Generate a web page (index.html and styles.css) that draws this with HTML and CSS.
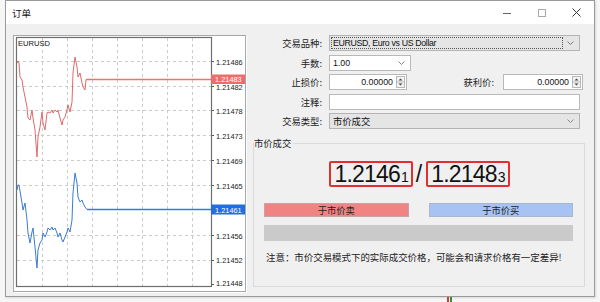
FILE: index.html
```html
<!DOCTYPE html>
<html lang="zh">
<head>
<meta charset="utf-8">
<title>订单</title>
<link rel="stylesheet" href="styles.css">
</head>
<body>
<div class="screen">
  <div class="window">
    <div class="titlebar">
      <span class="title">订单</span>
      <div class="wctrl">
        <svg width="8" height="8" viewBox="0 0 8 8"><line x1="0" y1="4.5" x2="8" y2="4.5" stroke="#666" stroke-width="1"/></svg>
      </div>
      <div class="wctrl">
        <svg width="8" height="8" viewBox="0 0 8 8"><rect x="0.5" y="0.5" width="7" height="7" fill="none" stroke="#aaa" stroke-width="1"/></svg>
      </div>
      <div class="wctrl">
        <svg width="9" height="9" viewBox="0 0 9 9"><path d="M0.5 0.5 L8.5 8.5 M8.5 0.5 L0.5 8.5" stroke="#333" stroke-width="1"/></svg>
      </div>
    </div>
    <div class="content">
      <div class="chart-panel">
        <svg class="chart" width="231" height="255" viewBox="14 36 231 255">
          <rect x="14" y="36" width="231" height="255" fill="#fff"/>
          <g stroke="#cbcbcb" stroke-width="1" stroke-dasharray="3,3">
            <line x1="42.5" y1="38" x2="42.5" y2="286"/>
            <line x1="67.5" y1="38" x2="67.5" y2="286"/>
            <line x1="92.5" y1="38" x2="92.5" y2="286"/>
            <line x1="117.5" y1="38" x2="117.5" y2="286"/>
            <line x1="142.5" y1="38" x2="142.5" y2="286"/>
            <line x1="167.5" y1="38" x2="167.5" y2="286"/>
            <line x1="192.5" y1="38" x2="192.5" y2="286"/>
            <line x1="17" y1="61.5" x2="211" y2="61.5"/>
            <line x1="17" y1="86.5" x2="211" y2="86.5"/>
            <line x1="17" y1="110.5" x2="211" y2="110.5"/>
            <line x1="17" y1="135.5" x2="211" y2="135.5"/>
            <line x1="17" y1="160.5" x2="211" y2="160.5"/>
            <line x1="17" y1="185.5" x2="211" y2="185.5"/>
            <line x1="17" y1="235.5" x2="211" y2="235.5"/>
            <line x1="17" y1="260.5" x2="211" y2="260.5"/>
          </g>
          <g stroke="#555" stroke-width="1">
            <line x1="211" y1="61.5" x2="214" y2="61.5"/>
            <line x1="211" y1="86.5" x2="214" y2="86.5"/>
            <line x1="211" y1="110.5" x2="214" y2="110.5"/>
            <line x1="211" y1="135.5" x2="214" y2="135.5"/>
            <line x1="211" y1="160.5" x2="214" y2="160.5"/>
            <line x1="211" y1="185.5" x2="214" y2="185.5"/>
            <line x1="211" y1="235.5" x2="214" y2="235.5"/>
            <line x1="211" y1="260.5" x2="214" y2="260.5"/>
            <line x1="211" y1="284.5" x2="214" y2="284.5"/>
          </g>
          <polyline fill="none" stroke="#e06a6a" stroke-width="1" points="17,63 18,61 19,63 20,77 22,80 23,87 25,97 27,107 28,118 30,120 32,110 33,118 35,130 37,157 38,137 40,127 42,112 43,123 45,130 47,113 48,112 50,113 52,110 53,113 55,110 57,112 58,110 60,118 62,125 63,120 65,117 67,110 68,105 70,112 72,102 73,73 75,57 77,67 78,77 80,73 82,83 83,87 85,90 86,79.5"/>
          <line x1="86" y1="79.5" x2="211" y2="79.5" stroke="#ee7070" stroke-width="1.3"/>
          <polyline fill="none" stroke="#3a7bd0" stroke-width="1" points="17,190 18,185 19,185 22,203 23,210 25,203 27,220 28,233 30,243 32,232 33,228 35,247 37,268 38,250 40,243 42,240 43,233 45,237 47,232 48,228 50,230 52,227 53,230 55,228 57,233 58,237 60,233 62,240 63,242 65,237 67,232 68,228 70,232 72,220 73,193 75,173 77,183 78,197 80,202 82,200 83,203 85,207 87,209.5"/>
          <line x1="87" y1="209.5" x2="211" y2="209.5" stroke="#2f7ce6" stroke-width="1.4"/>
          <rect x="16.5" y="37.5" width="195" height="249" fill="none" stroke="#6e6e6e" stroke-width="1.2"/>
          <text x="18" y="46" class="sym">EURUSD</text>
          <g class="axis">
            <text x="216" y="64.5">1.21486</text>
            <text x="216" y="89.5">1.21482</text>
            <text x="216" y="114">1.21478</text>
            <text x="216" y="139">1.21473</text>
            <text x="216" y="164">1.21469</text>
            <text x="216" y="188.5">1.21465</text>
            <text x="216" y="238.5">1.21456</text>
            <text x="216" y="263">1.21452</text>
            <text x="216" y="286">1.21448</text>
          </g>
          <rect x="211" y="74.5" width="34" height="9.5" fill="#ef6c6c"/>
          <text x="215" y="82" class="tag">1.21483</text>
          <rect x="211" y="204.5" width="34" height="10" fill="#1f6fe0"/>
          <text x="215" y="212.5" class="tag">1.21461</text>
        </svg>
      </div>
      <div class="form">
        <div class="row">
          <span class="lbl">交易品种:</span>
          <div class="combo full">
            <span class="val focus">EURUSD, Euro vs US Dollar</span>
            <span class="arrow"><svg width="7" height="4" viewBox="0 0 7 4"><path d="M0.5 0.5 L3.5 3.5 L6.5 0.5" fill="none" stroke="#777" stroke-width="1"/></svg></span>
          </div>
        </div>
        <div class="row">
          <span class="lbl">手数:</span>
          <div class="input lots">
            <span class="val">1.00</span>
            <span class="arrow"><svg width="7" height="4" viewBox="0 0 7 4"><path d="M0.5 0.5 L3.5 3.5 L6.5 0.5" fill="none" stroke="#888" stroke-width="1"/></svg></span>
          </div>
        </div>
        <div class="row">
          <span class="lbl">止损价:</span>
          <div class="input spin sl">
            <span class="num">0.00000</span>
            <span class="spinner"><svg width="9" height="12" viewBox="0 0 9 12"><rect x="0.5" y="0.5" width="8" height="11" fill="#f4f4f4" stroke="#b8b8b8"/><line x1="1" y1="6" x2="8" y2="6" stroke="#b8b8b8"/><path d="M2.5 4.5 L4.5 2.5 L6.5 4.5 Z" fill="#444"/><path d="M2.5 7.5 L4.5 9.5 L6.5 7.5 Z" fill="#444"/></svg></span>
          </div>
          <span class="lbl2">获利价:</span>
          <div class="input spin tp">
            <span class="num">0.00000</span>
            <span class="spinner"><svg width="9" height="12" viewBox="0 0 9 12"><rect x="0.5" y="0.5" width="8" height="11" fill="#f4f4f4" stroke="#b8b8b8"/><line x1="1" y1="6" x2="8" y2="6" stroke="#b8b8b8"/><path d="M2.5 4.5 L4.5 2.5 L6.5 4.5 Z" fill="#444"/><path d="M2.5 7.5 L4.5 9.5 L6.5 7.5 Z" fill="#444"/></svg></span>
          </div>
        </div>
        <div class="row">
          <span class="lbl">注释:</span>
          <div class="input full"></div>
        </div>
        <div class="row">
          <span class="lbl">交易类型:</span>
          <div class="combo full">
            <span class="val cjk">市价成交</span>
            <span class="arrow"><svg width="7" height="4" viewBox="0 0 7 4"><path d="M0.5 0.5 L3.5 3.5 L6.5 0.5" fill="none" stroke="#888" stroke-width="1"/></svg></span>
          </div>
        </div>
        <div class="group">
          <span class="legend">市价成交</span>
          <div class="prices">
            <div class="pbox"><span class="big">1.2146</span><span class="small">1</span></div>
            <span class="slash">/</span>
            <div class="pbox"><span class="big">1.2148</span><span class="small">3</span></div>
          </div>
          <div class="buttons">
            <div class="btn sell">于市价卖</div>
            <div class="btn buy">于市价买</div>
          </div>
          <div class="progress"></div>
          <div class="note">注意：市价交易模式下的实际成交价格，可能会和请求价格有一定差异!</div>
        </div>
      </div>
    </div>
  </div>
  <div class="strip"><span class="c-red"></span><span class="c-green"></span></div>
</div>
</body>
</html>
```
FILE: styles.css
```css
* { box-sizing: border-box; }
html, body { margin: 0; padding: 0; }
body {
  width: 600px;
  height: 302px;
  overflow: hidden;
  background: #f6f6f6;
  font-family: "Liberation Sans", "Noto Sans CJK SC", sans-serif;
  color: #1a1a1a;
}
.screen { padding-left: 5px; }
.window {
  width: 590px;
  height: 297px;
  border: 1px solid #9a9a9a;
  background: #f0f0f0;
  box-shadow: 1px 1px 2px rgba(0,0,0,0.12);
  display: flex;
  flex-direction: column;
}
.titlebar {
  height: 23px;
  background: #fff;
  display: flex;
  align-items: center;
  flex-shrink: 0;
}
.title {
  flex: 1;
  padding-left: 6px;
  font-family: "Noto Sans CJK SC", sans-serif;
  font-size: 9.5px;
  color: #111;
}
.wctrl {
  width: 35px;
  height: 23px;
  display: flex;
  align-items: center;
  justify-content: center;
}
.content {
  flex: 1;
  display: flex;
  padding: 11px 0 0 7px;
  gap: 7px;
}
.chart-panel {
  width: 233px;
  height: 257px;
  border: 1px solid #a8a8a8;
  box-shadow: 1px 1px 0 #fff;
  background: #fff;
}
.chart { display: block; }
.chart text { font-family: "Liberation Sans", sans-serif; }
.chart .sym { font-size: 7.6px; fill: #111; }
.chart .axis text { font-size: 7.4px; fill: #222; }
.chart .tag { font-size: 7.4px; fill: #fff; }

.form {
  width: 332px;
  display: flex;
  flex-direction: column;
}
.row {
  display: flex;
  align-items: center;
  height: 16px;
  margin-bottom: 3.5px;
}
.lbl {
  width: 69px;
  margin-right: 7px;
  text-align: right;
  font-family: "Noto Sans CJK SC", sans-serif;
  font-size: 9.3px;
  color: #222;
  white-space: nowrap;
}
.lbl2 {
  flex: 1;
  text-align: right;
  margin-right: 9px;
  font-family: "Noto Sans CJK SC", sans-serif;
  font-size: 9.3px;
  color: #222;
  white-space: nowrap;
}
.combo, .input {
  height: 16px;
  display: flex;
  align-items: center;
  font-size: 8.8px;
  color: #111;
}
.combo {
  background: #e5e5e5;
  border: 1px solid #b4b4b4;
  padding: 1px;
}
.input {
  background: #fff;
  border: 1px solid #b9b9b9;
}
.full { width: 251px; }
.combo .val {
  flex: 1;
  height: 12px;
  line-height: 11px;
  padding-left: 1px;
  white-space: nowrap;
  letter-spacing: -0.35px;
  border: 1px solid transparent;
}
.combo .val.focus { border: 1px dotted #555; }
.combo .val.cjk {
  font-family: "Noto Sans CJK SC", sans-serif;
  font-size: 9.3px;
  letter-spacing: 0;
}
.arrow {
  width: 15px;
  display: flex;
  align-items: center;
  justify-content: center;
}
.lots { width: 82px; }
.lots .val { flex: 1; padding-left: 3px; }
.lots .arrow { width: 17px; }
.spin .num {
  flex: 1;
  text-align: right;
  padding-right: 3px;
}
.spinner {
  display: flex;
  align-items: center;
  padding-right: 1px;
}
.sl { width: 78px; }
.tp { width: 80px; margin-right: 2px; }

.group {
  position: relative;
  margin-top: 10.5px;
  height: 144px;
  border: 1px solid #dadada;
  padding: 17px 11px 0 10px;
}
.legend {
  position: absolute;
  left: 0;
  top: -7px;
  background: #f0f0f0;
  padding-right: 2px;
  font-family: "Noto Sans CJK SC", sans-serif;
  font-size: 9.3px;
  line-height: 12px;
  color: #222;
}
.prices {
  display: flex;
  align-items: center;
  justify-content: center;
  height: 26px;
  padding-left: 2px;
}
.pbox {
  height: 26px;
  border: 2px solid #e3302c;
  border-radius: 2px;
  display: flex;
  align-items: baseline;
  padding: 0 2px 0 3px;
  line-height: 22px;
}
.big {
  font-size: 23px;
  letter-spacing: -0.8px;
  color: #111;
}
.small {
  font-size: 14px;
  color: #111;
  margin-left: 1px;
}
.slash {
  font-size: 23px;
  margin: 0 4px 0 3px;
  color: #111;
  line-height: 22px;
}
.buttons {
  display: flex;
  gap: 20px;
  margin-top: 16px;
}
.btn {
  flex: 1;
  height: 14px;
  display: flex;
  align-items: center;
  justify-content: center;
  font-family: "Noto Sans CJK SC", sans-serif;
  font-size: 9.3px;
  color: #222;
}
.sell { background: #f28383; border: 1px solid #c9a3a3; }
.buy { background: #a6c3f3; border: 1px solid #a9b6cc; }
.progress {
  margin-top: 8px;
  height: 16px;
  background: #cacaca;
}
.note {
  margin-top: 10px;
  padding-left: 2px;
  font-family: "Noto Sans CJK SC", sans-serif;
  font-size: 9.45px;
  line-height: 12px;
  color: #222;
  white-space: nowrap;
}
.strip {
  height: 5px;
  display: flex;
  padding-left: 442px;
  gap: 1px;
}
.c-red { width: 2px; height: 5px; background: #d23a3a; }
.c-green { width: 2px; height: 5px; background: #2f8f2f; }
```
